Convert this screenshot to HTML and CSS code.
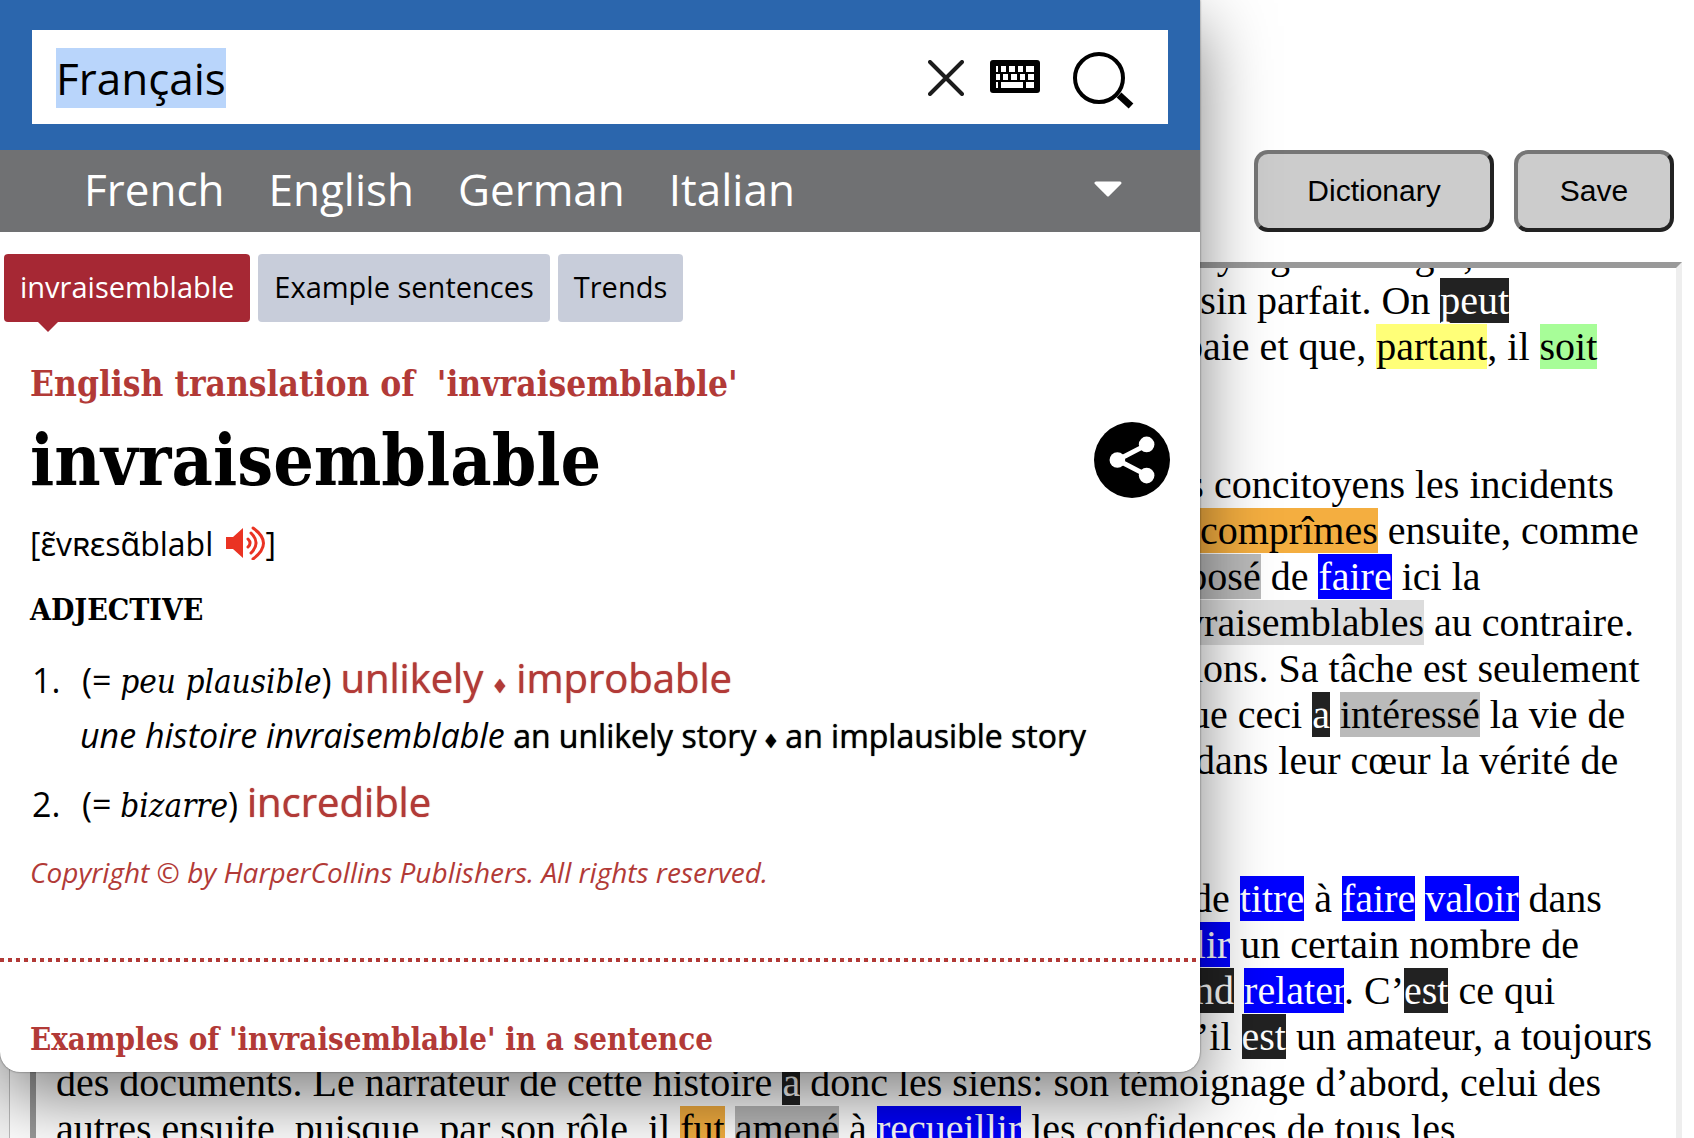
FILE: index.html
```html
<!DOCTYPE html>
<html lang="fr">
<head>
<meta charset="utf-8">
<title>Reader</title>
<link rel="stylesheet" href="styles.css">
</head>
<body>
<main class="reader">
  <div class="toolbar">
    <button type="button" class="tool wide">Dictionary</button>
    <button type="button" class="tool">Save</button>
  </div>
  <article class="pane">
    <div class="text">
      <p class="line"><span class="lead" style="width:1123px"></span>paysage sans égal, au milieu</p>
      <p class="line"><span class="lead" style="width:1091px"></span>dessin parfait. On <mark class="black">peut</mark></p>
      <p class="line"><span class="lead" style="width:1127px"></span>baie et que, <mark class="yellow">partant</mark>, il <mark class="green">soit</mark></p>
      <p class="line"></p>
      <p class="line"></p>
      <p class="line"><span class="lead" style="width:1099px"></span>ses concitoyens les incidents</p>
      <p class="line"><span class="lead" style="width:1144px"></span><mark class="orange">comprîmes</mark> ensuite, comme</p>
      <p class="line"><span class="lead" style="width:1078px"></span><mark class="gray">proposé</mark> de <mark class="blue">faire</mark> ici la</p>
      <p class="line"><span class="lead" style="width:1097px"></span><mark class="light">invraisemblables</mark> au contraire.</p>
      <p class="line"><span class="lead" style="width:976px"></span>contradictions. Sa tâche est seulement</p>
      <p class="line"><span class="lead" style="width:1114px"></span>que ceci <mark class="black">a</mark> <mark class="gray">intéressé</mark> la vie de</p>
      <p class="line"><span class="lead" style="width:1139px"></span>dans leur cœur la vérité de</p>
      <p class="line"></p>
      <p class="line"></p>
      <p class="line"><span class="lead" style="width:1136px"></span>de <mark class="blue">titre</mark> à <mark class="blue">faire</mark> <mark class="blue">valoir</mark> dans</p>
      <p class="line"><span class="lead" style="width:1030px"></span><mark class="blue">recueillir</mark> un certain nombre de</p>
      <p class="line"><span class="lead" style="width:1087px"></span><mark class="black">prend</mark> <mark class="blue">relater</mark>. C’<mark class="black">est</mark> ce qui</p>
      <p class="line"><span class="lead" style="width:1100px"></span>qu’il <mark class="black">est</mark> un amateur, a toujours</p>
      <p class="line">des documents. Le narrateur de cette histoire <mark class="black">a</mark> donc les siens: son témoignage d’abord, celui des</p>
      <p class="line">autres ensuite, puisque, par son rôle, il <mark class="orange">fut</mark> <mark class="gray">amené</mark> à <mark class="blue">recueillir</mark> les confidences de tous les</p>
    </div>
  </article>
</main>

<aside class="popup" lang="en">
  <form class="search">
    <div class="field">
      <input class="query" type="text" value="Français" aria-label="Search" autofocus>
      <button type="button" class="icon" aria-label="Clear">
        <svg width="36" height="36" viewBox="0 0 36 36"><path d="M2 2 34 34M34 2 2 34" stroke="#1c1c1c" stroke-width="4" stroke-linecap="round"/></svg>
      </button>
      <button type="button" class="icon" aria-label="Keyboard">
        <svg width="50" height="36" viewBox="0 0 50 36"><rect width="50" height="33" rx="3"/><path fill="#fff" d="M6 6h2v6H6zM11 6h5v6h-5zM19 6h6v6h-6zM28 6h5v6h-5zM36 6h8v6h-8zM6 14h4v6H6zM13 14h5v6h-5zM21 14h6v6h-6zM30 14h5v6h-5zM38 14h6v6h-6zM6 22h2v6H6zM11 22h22v6H11zM36 22h8v6h-8z"/></svg>
      </button>
      <button type="submit" class="icon submit" aria-label="Search">
        <svg width="62" height="62" viewBox="0 0 62 62"><circle cx="27" cy="31" r="24" fill="none" stroke="#000" stroke-width="4"/><path d="M47 48 59 59" stroke="#000" stroke-width="7"/></svg>
      </button>
    </div>
  </form>
  <nav class="langs">
    <a href="#">French</a><a href="#">English</a><a href="#">German</a><a href="#">Italian</a>
    <button type="button" class="icon more" aria-label="More languages">
      <svg width="28" height="16" viewBox="0 0 28 16"><path d="M2 2H26L14 14Z" fill="#fff" stroke="#fff" stroke-width="3" stroke-linejoin="round"/></svg>
    </button>
  </nav>
  <div class="tabs">
    <a class="tab active" href="#">invraisemblable</a>
    <a class="tab" href="#">Example sentences</a>
    <a class="tab" href="#">Trends</a>
  </div>
  <section class="entry">
    <h2 class="kicker">English translation of&nbsp; 'invraisemblable'</h2>
    <div class="headword">
      <h1>invraisemblable</h1>
      <button type="button" class="icon" aria-label="Share">
        <svg width="76" height="76" viewBox="0 0 78 78"><circle cx="39" cy="39" r="39"/><path d="M55 23 24 39 55 55" fill="none" stroke="#fff" stroke-width="5"/><g fill="#fff"><circle cx="54" cy="23" r="8"/><circle cx="24" cy="39" r="8"/><circle cx="54" cy="55" r="8"/></g></svg>
      </button>
    </div>
    <p class="phonetic">[ɛ̃vʀɛsɑ̃blabl <svg width="40" height="34" viewBox="0 0 40 34"><path fill="#ea3323" d="M0 11H7L17 2V32L7 23H0Z"/><path fill="none" stroke="#ea3323" stroke-width="3" stroke-linecap="round" d="M22 13Q26 17 22 21M25 7Q35 17 25 27M27 2Q48 17 27 33"/></svg>]</p>
    <h3>ADJECTIVE</h3>
    <ol>
      <li>
        <div class="sense">(= <i>peu plausible</i>) <b>unlikely <small>♦</small> improbable</b></div>
        <p class="example"><em>une histoire invraisemblable</em> <span>an unlikely story <small>♦</small> an implausible story</span></p>
      </li>
      <li>
        <div class="sense">(= <i>bizarre</i>) <b>incredible</b></div>
      </li>
    </ol>
    <p class="copyright">Copyright © by HarperCollins Publishers. All rights reserved.</p>
  </section>
  <hr class="dots">
  <section class="examples">
    <h2>Examples of 'invraisemblable' in a sentence</h2>
  </section>
</aside>
<script src="main.js"></script>
</body>
</html>
```
FILE: main.js
```js
// The query starts selected, so typing replaces it.
const query = document.querySelector(".query");
query.focus();
query.select();
```
FILE: styles.css
```css
* { box-sizing: border-box; }
html, body { height: 100%; }
body { margin: 0; background: #f4f4f4; color: #000; overflow: hidden; position: relative; }
p, h1, h2, h3, ol { margin: 0; padding: 0; }
a { color: inherit; text-decoration: none; }

.reader { height: 100%; display: flex; flex-direction: column; margin-left: 9px; border-left: 1px solid #bbb; background: #fff; }
.toolbar { display: flex; justify-content: flex-end; gap: 20px; padding: 150px 20px 30px; }
.tool {
  height: 82px; width: 160px; background: #ccc; color: #000;
  border: 4px solid; border-color: #767676 #222 #222 #767676; border-radius: 14px;
  font: 30px "Liberation Sans", Arial, sans-serif;
}
.tool.wide { width: 240px; }
.pane {
  flex: 1; min-height: 0; overflow: hidden; margin: 0 12px 0 20px; padding: 0 20px;
  border: 6px solid; border-color: #999 #eee #eee #999; border-bottom: 0;
}
.text { margin-top: -36px; font: 40px/46px "Liberation Serif", "Times New Roman", serif; }
.line { height: 46px; white-space: nowrap; }
.lead { display: inline-block; }
mark { color: #000; }
.black { background: #222; color: #fff; }
.blue { background: #00f; color: #fff; }
.yellow { background: #ffff78; }
.green { background: #a7fd98; }
.orange { background: #f4ae40; }
.gray { background: #bababa; }
.light { background: #dcdcdc; }

.popup {
  position: absolute; top: 0; left: 0; width: calc(100% - 494px);
  padding-bottom: 8px; background: #fff; border-radius: 0 0 20px 20px;
  box-shadow: 0 0 2px rgba(0,0,0,.6), 0 26px 70px rgba(0,0,0,.5);
  font-family: "Open Sans", "Noto Sans", sans-serif;
}
.search { background: #2b66ad; padding: 30px 32px 26px; }
.field { display: flex; align-items: center; height: 94px; padding: 2px 34px 0 24px; background: #fff; }
.query { flex: 1; min-width: 0; border: 0; padding: 0; outline: 0; height: 60px; font: 44px/60px "Open Sans", sans-serif; }
.query::selection { background: #b9d5fb; color: #000; }
.icon { border: 0; padding: 0; background: none; display: flex; margin-left: 26px; }
.submit { margin-left: 32px; }
.langs { display: flex; align-items: center; gap: 44px; height: 82px; padding: 0 78px 4px 84px; background: #707173; color: #fff; font-size: 44px; }
.more { margin-left: auto; }
.tabs { display: flex; gap: 8px; padding: 22px 4px 0; }
.tab { position: relative; padding: 0 16px 2px; background: #c8cdda; border-radius: 4px; font-size: 29px; line-height: 66px; }
.active { background: #a62834; color: #fff; }
.active::after { content: ""; position: absolute; left: 34px; top: 100%; border: 10px solid transparent; border-top-color: #a62834; border-bottom: 0; }

.entry { padding: 36px 30px 60px; }
.kicker, h1, h3, .examples h2 { font-family: "DejaVu Serif Condensed", "DejaVu Serif", serif; font-stretch: condensed; font-weight: 700; white-space: nowrap; }
.kicker { color: #b23a37; font-size: 35px; line-height: 52px; }
.headword { display: flex; justify-content: space-between; align-items: center; height: 100px; }
h1 { font-size: 71px; line-height: 80px; }
.phonetic { font-size: 32px; line-height: 68px; }
.phonetic svg { vertical-align: -4px; margin-left: 4px; }
h3 { font-size: 30px; line-height: 64px; }
ol { list-style: none; counter-reset: n; padding-top: 8px; }
li { counter-increment: n; position: relative; padding-left: 50px; margin-bottom: 12px; }
li::before { content: counter(n) "."; position: absolute; left: 2px; font-size: 34px; line-height: 60px; }
.sense { height: 60px; font-size: 34px; line-height: 60px; padding-left: 2px; }
.sense i { font: italic 33px/40px "DejaVu Serif Condensed", serif; font-stretch: condensed; }
.sense b { color: #b23a37; font-size: 40px; line-height: 40px; font-weight: 400; text-shadow: 0 0 1px currentColor; }
small { font-size: 24px; line-height: 24px; }
.example { font-size: 32px; line-height: 52px; }
.example em { font-size: 34px; line-height: 40px; }
.example span { text-shadow: 0 0 1px currentColor; }
.copyright { color: #b23a37; font-size: 28px; font-style: italic; line-height: 52px; }
.dots { margin: 0; border: 0; height: 4px; background: repeating-linear-gradient(90deg, #b23a37 0 4px, #fff 4px 8px); }
.examples { padding: 52px 30px 0; }
.examples h2 { color: #b23a37; font-size: 31px; line-height: 50px; }
```
